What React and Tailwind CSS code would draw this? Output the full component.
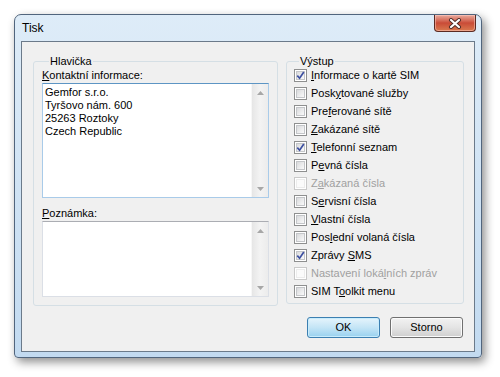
import React from 'react';

const outputs = [
  { pre: '', key: 'I', post: 'nformace o kartě SIM', checked: true },
  { pre: 'Posk', key: 'y', post: 'tované služby' },
  { pre: 'Pre', key: 'f', post: 'erované sítě' },
  { pre: '', key: 'Z', post: 'akázané sítě' },
  { pre: '', key: 'T', post: 'elefonní seznam', checked: true },
  { pre: 'P', key: 'e', post: 'vná čísla' },
  { pre: 'Z', key: 'a', post: 'kázaná čísla', disabled: true },
  { pre: 'S', key: 'e', post: 'rvisní čísla' },
  { pre: '', key: 'V', post: 'lastní čísla' },
  { pre: 'Pos', key: 'l', post: 'ední volaná čísla' },
  { pre: 'Zprávy ', key: 'S', post: 'MS', checked: true },
  { pre: 'Nastavení loká', key: 'l', post: 'ních zpráv', disabled: true },
  { pre: 'SIM T', key: 'o', post: 'olkit menu' },
];

const CheckBox = ({ checked, disabled }) => (
  <span
    className={`w-[13px] h-[13px] shrink-0 border p-[1px] bg-white ${
      disabled ? 'border-[#c9c9c9]' : 'border-[#8e8f8f]'
    }`}
  >
    <span
      className={`relative block w-full h-full border ${
        disabled
          ? 'border-[#ececec] bg-[#fbfbfb]'
          : 'border-[#c4c6c9] bg-linear-to-br from-[#d9dadc] to-[#fafafa]'
      }`}
    >
      {checked && (
        <svg viewBox="0 0 9 9" className="absolute -left-[1px] -top-[1px] w-[9px] h-[9px]">
          <path d="M1.3 4.6 L3.6 7.2 L7.8 1" fill="none" stroke="#3c4fa0" strokeWidth="1.7" />
        </svg>
      )}
    </span>
  </span>
);

const ScrollBar = () => (
  <div className="w-[17px] flex flex-col bg-linear-to-r from-[#e6e6e6] via-[#f3f3f3] to-[#ececec] border-l border-[#f7f7f7]">
    <div className="h-[17px] flex items-center justify-center">
      <svg viewBox="0 0 7 4" className="w-[7px] h-[4px]">
        <path d="M3.5 0 L7 4 L0 4 Z" fill="#a7a7a7" />
      </svg>
    </div>
    <div className="flex-1" />
    <div className="h-[17px] flex items-center justify-center">
      <svg viewBox="0 0 7 4" className="w-[7px] h-[4px]">
        <path d="M0 0 L7 0 L3.5 4 Z" fill="#a7a7a7" />
      </svg>
    </div>
  </div>
);

const TextBox = ({ value, focused, height }) => (
  <div
    className={`flex bg-white border ${
      focused
        ? 'border-[#a9cbe9] border-t-[#5d95c4]'
        : 'border-[#dbdfe6] border-t-[#abadb3]'
    } ${height}`}
  >
    <textarea
      defaultValue={value}
      className="flex-1 resize-none overflow-hidden outline-none pl-[2px] pt-[2px] text-[11px] leading-[13px] text-black"
    />
    <ScrollBar />
  </div>
);

const Button = ({ children, primary }) => (
  <button
    className={`w-[73px] h-[21px] rounded-[3px] border text-[11px] text-black ${
      primary
        ? 'border-[#3c7fb1] bg-linear-to-b from-[#e5f4fc] via-[#c4e5f6] to-[#98d1ef] shadow-[inset_0_0_0_1px_#c8ecfc]'
        : 'border-[#707070] bg-linear-to-b from-[#f2f2f2] via-[#e4e4e4] to-[#cfcfcf] shadow-[inset_0_0_0_1px_#fbfbfb]'
    }`}
  >
    {children}
  </button>
);

export default function App() {
  return (
    <div className="w-[500px] h-[377px] bg-white pl-[14px] pt-[14px] font-['Liberation_Sans',Arial,sans-serif] text-[11px] leading-[13px] text-black">
      <div className="w-[468px] h-[344px] flex flex-col rounded-t-[7px] rounded-b-[4px] border border-[#51657d] bg-linear-to-b from-[#deecf8] to-[#c2daf0] shadow-[3px_4px_10px_rgba(0,0,0,0.45)]">
        {/* title bar */}
        <div className="h-[26px] flex justify-between pl-[7px] pr-[5px]">
          <span className="text-[12px] leading-[14px] mt-[6px]">Tisk</span>
          <div className="w-[42px] h-[17px] rounded-b-[4px] border border-t-0 border-[#5b2a22] bg-linear-to-b from-[#e9ab9f] via-[#c94b37] to-[#d9794f] flex items-center justify-center shadow-[inset_0_0_0_1px_rgba(255,210,200,0.5)]">
            <svg viewBox="0 0 14 11" className="w-[14px] h-[11px]">
              <path d="M3 2 L11 9 M11 2 L3 9" stroke="#4a2a26" strokeWidth="4" strokeLinecap="round" />
              <path d="M3 2 L11 9 M11 2 L3 9" stroke="#ffffff" strokeWidth="2.2" strokeLinecap="round" />
            </svg>
          </div>
        </div>

        {/* client area */}
        <div className="mx-[6px] h-[311px] border border-[#6b7a8a] bg-[#f0f0f0] pt-[13px] pl-[11px] pr-[10px]">
          <div className="flex items-start gap-[8px]">
            <fieldset className="w-[245px] border border-[#d5dfe5] rounded-[3px] px-[8px] pb-[8px]">
              <legend className="ml-[7px] px-[1px] leading-[13px]">Hlavička</legend>
              <div className="mt-[1px]">
                <u>K</u>ontaktní informace:
              </div>
              <div className="mt-[1px]">
                <TextBox
                  focused
                  height="h-[115px]"
                  value={'Gemfor s.r.o.\nTyršovo nám. 600\n25263 Roztoky\nCzech Republic'}
                />
              </div>
              <div className="mt-[9px]">
                <u>P</u>oznámka:
              </div>
              <div className="mt-[1px]">
                <TextBox height="h-[76px]" value="" />
              </div>
            </fieldset>

            <fieldset className="w-[178px] border border-[#d5dfe5] rounded-[3px] pl-[7px] pb-[5px]">
              <legend className="ml-[5px] px-[1px] leading-[13px]">Výstup</legend>
              <div className="mt-[1px] flex flex-col gap-[5px]">
                {outputs.map((o, i) => (
                  <label key={i} className="h-[13px] flex items-center gap-[4px]">
                    <CheckBox checked={o.checked} disabled={o.disabled} />
                    <span className={o.disabled ? 'text-[#a0a0a0]' : ''}>
                      {o.pre}
                      <u>{o.key}</u>
                      {o.post}
                    </span>
                  </label>
                ))}
              </div>
            </fieldset>
          </div>

          <div className="mt-[11px] mr-[1px] flex justify-end gap-[10px]">
            <Button primary>OK</Button>
            <Button>Storno</Button>
          </div>
        </div>
      </div>
    </div>
  );
}
